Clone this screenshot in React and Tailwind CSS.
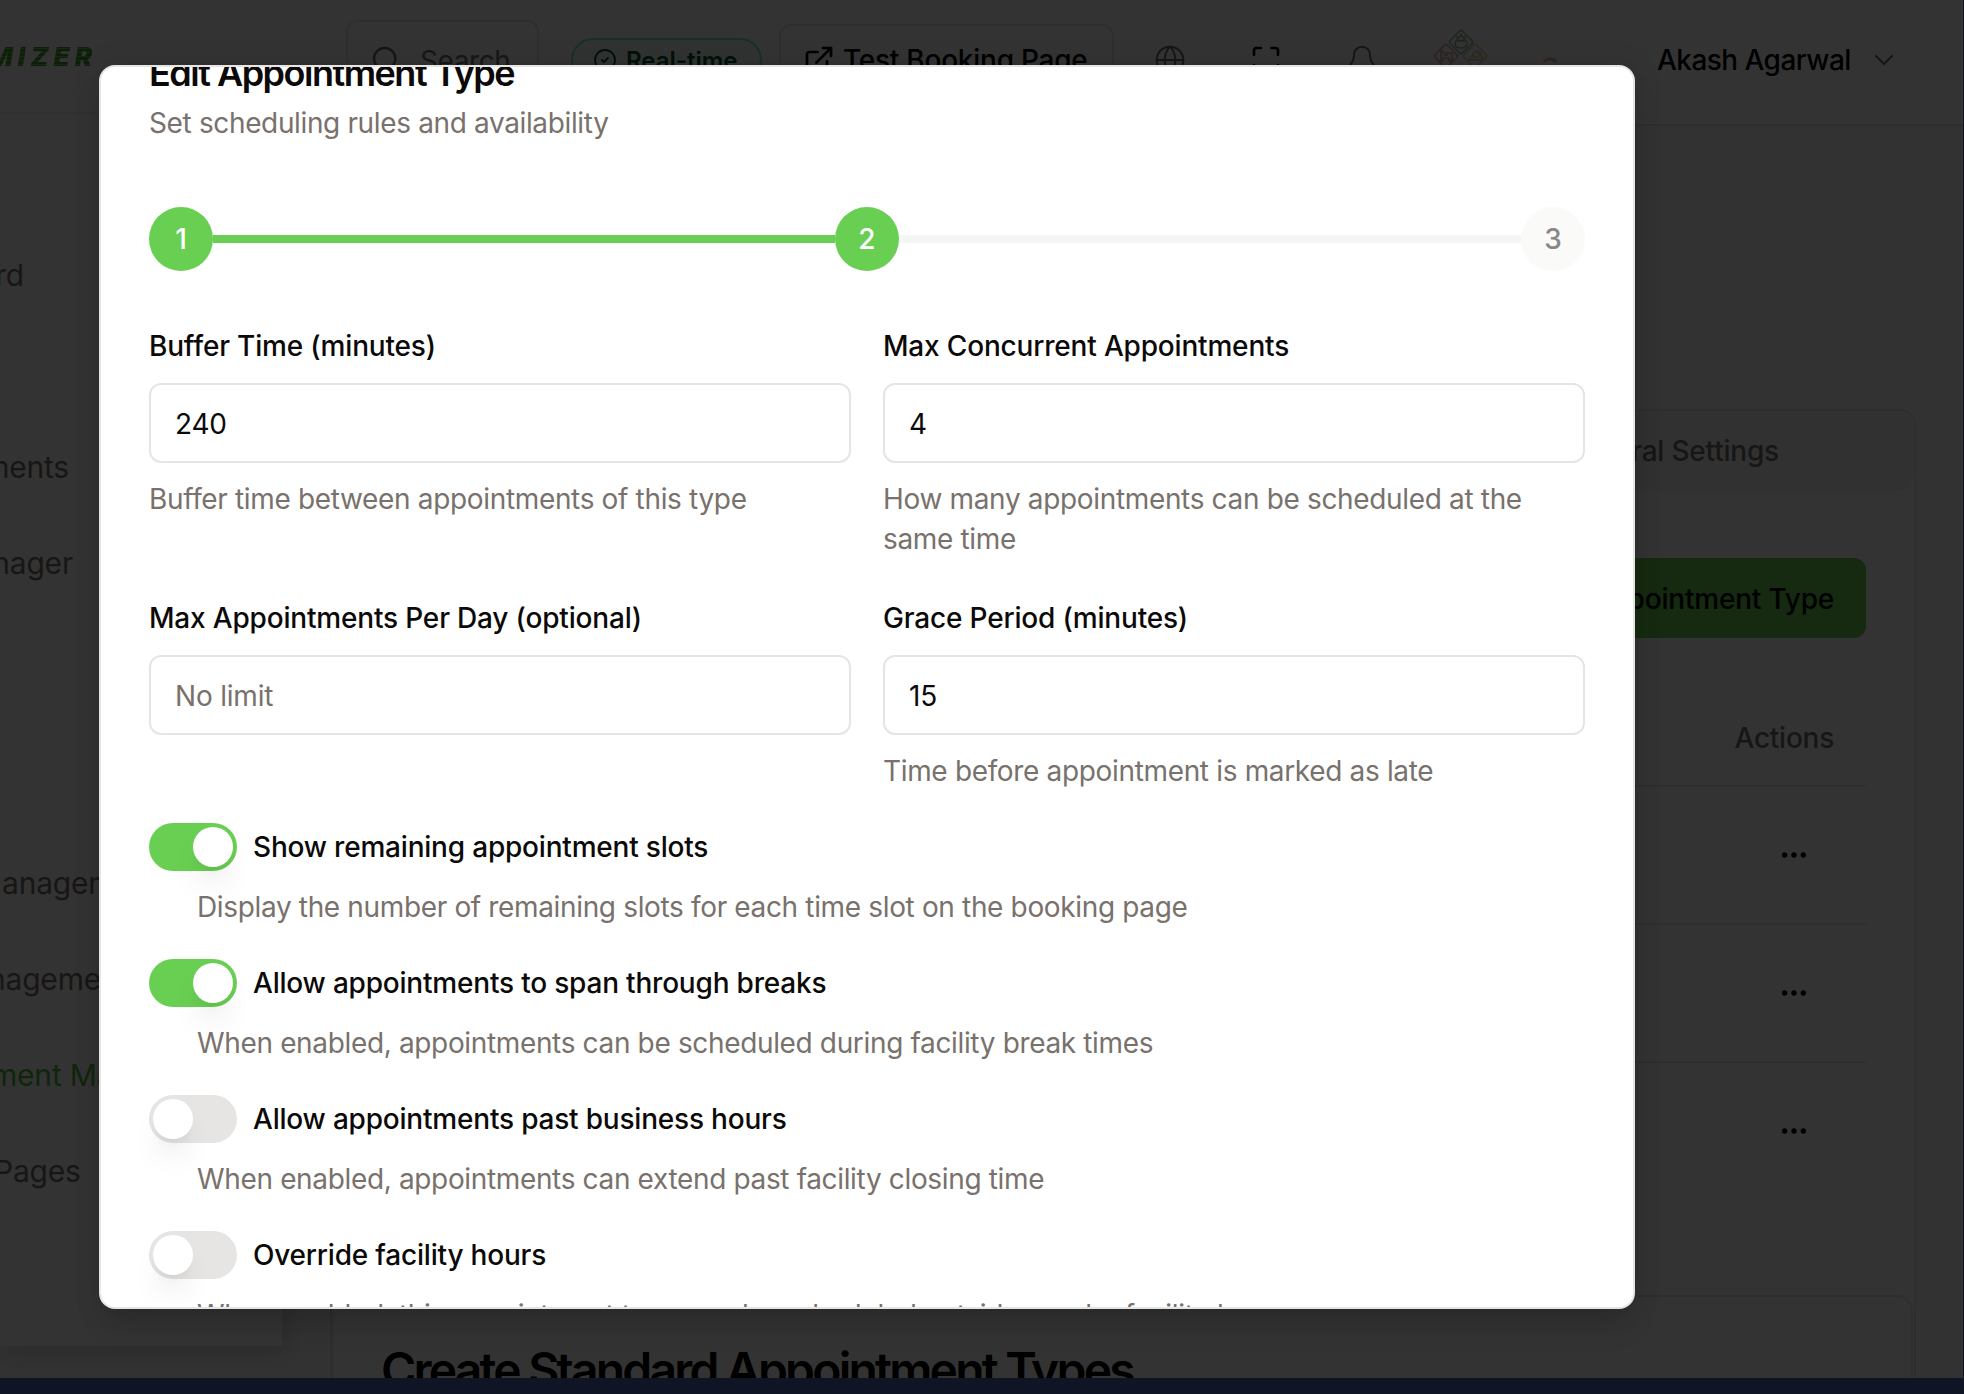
import { Search, CircleCheck, ExternalLink, Globe, Maximize, Bell, ChevronDown, Ellipsis } from "lucide-react";

const steps = [
  { n: 1, done: true },
  { n: 2, done: true },
  { n: 3, done: false },
];

const switches = [
  ["Show remaining appointment slots", "Display the number of remaining slots for each time slot on the booking page", true],
  ["Allow appointments to span through breaks", "When enabled, appointments can be scheduled during facility break times", true],
  ["Allow appointments past business hours", "When enabled, appointments can extend past facility closing time", false],
  ["Override facility hours", "When enabled, this appointment type can be scheduled outside regular facility hours", false],
];

const navItems = [
  { text: "rd", pos: "w-[24px] justify-end" },
  { text: "" },
  { text: "ments", pos: "w-[69px] justify-end" },
  { text: "nager", pos: "w-[73px] justify-end" },
];

const navItemsLower = [
  { text: "anagement", pos: "pl-[2px]" },
  { text: "nagement", pos: "-ml-[12px]" },
  { text: "ment Management", pos: "-ml-[9px]", active: true },
  { text: "Pages", pos: "-ml-[6px]" },
];

function NavList({ items }) {
  return items.map((item, i) => (
    <div
      key={i}
      className={
        "flex h-24 items-center text-[30px] tracking-[-0.2px] whitespace-nowrap " +
        (item.active ? "text-[#58bb42] " : "text-stone-500 ") +
        (item.pos || "")
      }
    >
      {item.text}
    </div>
  ));
}

function Sidebar() {
  return (
    <aside className="h-[1346px] w-[282px] shrink-0 overflow-hidden bg-white shadow-[4px_8px_24px_rgba(0,0,0,0.15)]">
      <div className="flex h-[114px] items-center border-b-2 border-stone-100">
        <div className="-ml-[12px] bg-[repeating-linear-gradient(180deg,#3f9d2c_0px,#3f9d2c_3px,#6fc95b_3px,#6fc95b_4px)] bg-clip-text pr-1 text-[26px] font-black tracking-[5px] text-transparent italic">
          MIZER
        </div>
      </div>
      <div className="pt-[113px]">
        <NavList items={navItems} />
        <div className="h-[224px]" />
        <NavList items={navItemsLower} />
      </div>
    </aside>
  );
}

function CompanyLogo() {
  return (
    <svg className="ml-[52px] h-16 w-40 shrink-0 opacity-60" viewBox="0 0 160 64" fill="none" strokeWidth="1.500" strokeLinejoin="round">
      <g stroke="#5d9468">
        <rect x="22.3" y="5.3" width="17.4" height="17.4" rx="2" transform="rotate(45 31 14)" />
        <path d="M27 12c-3 2-3 8 4 8s7-6 4-8" />
        <path d="M26.5 8.500 29 9.500l2-3 2 3 2.500-1-1.500 3.500 1.500 1-4-.5-.5 1-.5-1-4 .5 1.500-1z" />
      </g>
      <g stroke="#c9764d">
        <rect x="7.3" y="19.3" width="17.4" height="17.4" rx="2" transform="rotate(45 16 28)" />
        <path d="M11 25v8h2v-3h6v3h3v-8h-8l-3-3zM14 27h4" />
      </g>
      <g stroke="#c9a84d">
        <rect x="36.3" y="19.3" width="17.4" height="17.4" rx="2" transform="rotate(45 45 28)" />
        <circle cx="46" cy="26.5" r="3" />
        <path d="M38.500 32h13.500c0-6-1-9-5-9s-4 6-8.500 9z" />
      </g>
      <path d="M114 34c2-4 10-4 12 0" stroke="#d98a5c" strokeWidth="3" />
    </svg>
  );
}

function Header() {
  return (
    <header className="flex h-[126px] shrink-0 items-center border-b-2 border-stone-200 bg-white pb-1 pl-[64px]">
      <div className="flex h-20 w-[193px] shrink-0 items-center rounded-xl border-2 border-stone-200 pl-[22px] text-[28px] tracking-[-0.4px] text-stone-500">
        <Search className="mr-[18px] size-8 shrink-0" strokeWidth={1.8} />
        <span className="pt-[2px]">Search</span>
      </div>
      <div className="ml-8 flex h-11 w-[191px] shrink-0 items-center gap-[9px] rounded-full border-2 border-green-300 bg-green-50 pl-5 text-2xl font-semibold whitespace-nowrap text-green-900">
        <CircleCheck className="size-6 shrink-0" strokeWidth={1.8} />
        <span className="pt-[2px]">Real-time</span>
      </div>
      <div className="ml-[17px] flex h-[72px] w-[335px] shrink-0 items-center gap-2 rounded-xl border-2 border-stone-200 pl-[22px] text-[28px] font-medium tracking-[-0.25px] whitespace-nowrap text-black">
        <ExternalLink className="size-8 shrink-0" />
        <span>Test Booking Page</span>
      </div>
      <Globe className="ml-10 size-8 shrink-0 text-stone-500" strokeWidth={1.5} />
      <Maximize className="ml-16 size-8 shrink-0 text-black" />
      <Bell className="ml-16 size-8 shrink-0 text-stone-500" strokeWidth={1.5} />
      <CompanyLogo />
      <span className="ml-[67px] w-[211px] shrink-0 text-[28px] font-medium tracking-[-0.55px] whitespace-nowrap text-black">Akash Agarwal</span>
      <ChevronDown className="size-8 shrink-0 text-stone-500" strokeWidth={1.6} />
    </header>
  );
}

function Content() {
  return (
    <main className="ml-12 flex h-[969px] w-[1586px] flex-col rounded-t-2xl border-2 border-b-0 border-stone-200 bg-white">
      <div className="flex h-20 shrink-0 items-center justify-end rounded-2xl bg-stone-100 pr-[135px] text-[28px] font-medium tracking-[-0.2px] text-stone-500">
        ral Settings
      </div>
      <div className="mr-12 ml-12 flex flex-col pt-[67px]">
        <div className="flex h-20 w-[400px] items-center justify-end self-end rounded-xl bg-[#69cf52] pr-8 text-[28px] font-medium tracking-[-0.2px] whitespace-nowrap text-black">
          <span className="pt-[1px]">pointment Type</span>
        </div>
        <div className="mt-[52px] flex h-[97px] items-center justify-end border-b-2 border-stone-200 pt-[1px] pr-8 text-[28px] font-medium tracking-[-0.25px] text-stone-500">
          Actions
        </div>
        {[0, 1, 2].map((r) => (
          <div key={r} className={r < 2 ? "flex h-[138px] items-center justify-end border-b-2 border-stone-200 pr-14" : "flex h-[138px] items-center justify-end pr-14 pb-[2px]"}>
            <Ellipsis className="size-8 text-black" />
          </div>
        ))}
      </div>
      <div className="mt-auto mr-[1px] -ml-[1px] h-[83px] shrink-0 overflow-hidden rounded-t-2xl border-2 border-b-0 border-stone-200 bg-white pt-[49px] pl-[48px]">
        <h2 className="text-[48px] leading-[48px] font-semibold tracking-[-2.8px] whitespace-nowrap text-black">Create Standard Appointment Types</h2>
      </div>
    </main>
  );
}

function Field({ label, value, placeholder, help }) {
  return (
    <div className="flex flex-col">
      <label className="h-7 text-[28px] leading-[30px] font-medium tracking-[-0.18px] whitespace-nowrap text-[#0c0a09]">{label}</label>
      <input
        className="mt-6 h-20 w-full rounded-xl border-2 border-[#e7e5e4] bg-white px-6 pt-[2px] text-[28px] tracking-[-0.2px] text-[#0c0a09] placeholder:text-[#78716c]"
        defaultValue={value}
        placeholder={placeholder}
      />
      {help && <p className="mt-4 text-[28px] leading-10 tracking-[-0.34px] text-[#78716c]">{help}</p>}
    </div>
  );
}

function Toggle({ label, help, on }) {
  return (
    <div className="h-[104px]">
      <div className="flex h-12 items-center gap-4">
        <div className={on ? "flex h-12 w-[88px] items-center justify-end rounded-full bg-[#69cf52] p-1" : "flex h-12 w-[88px] items-center rounded-full bg-[#e7e5e4] p-1"}>
          <div className="size-10 rounded-full bg-white shadow-[0_20px_30px_-6px_rgba(0,0,0,0.1),0_8px_12px_-8px_rgba(0,0,0,0.1)]" />
        </div>
        <span className="text-[28px] leading-7 font-medium tracking-[-0.2px] whitespace-nowrap text-[#0c0a09]">{label}</span>
      </div>
      <p className="mt-4 ml-12 text-[28px] leading-10 tracking-[-0.35px] whitespace-nowrap text-[#78716c]">{help}</p>
    </div>
  );
}

function EditDialog() {
  return (
    <div className="absolute top-[65px] left-[99px] h-[1244px] w-[1536px] overflow-hidden rounded-2xl border-2 border-[#e7e5e4] bg-white px-12 shadow-[0_20px_30px_-6px_rgba(0,0,0,0.15),0_0_30px_rgba(0,0,0,0.1)]">
      <h2 className="-mt-3 text-[36px] leading-9 font-semibold tracking-[-1.5px] text-[#0c0a09]">Edit Appointment Type</h2>
      <p className="mt-3 text-[28px] leading-10 tracking-[-0.36px] text-[#78716c]">Set scheduling rules and availability</p>
      <div className="mt-[64px] flex items-center">
        {steps.map((s, i) => (
          <div key={s.n} className={i ? "flex flex-1 items-center" : "flex items-center"}>
            {i > 0 && <div className={s.done ? "h-2 flex-1 bg-[#69cf52]" : "h-2 flex-1 bg-[#f5f5f4]"} />}
            <div className={s.done ? "flex size-16 items-center justify-center rounded-full bg-[#69cf52] text-[28px] font-medium text-white" : "flex size-16 items-center justify-center rounded-full bg-[#fafaf9] text-[28px] font-medium text-[#888]"}>{s.n}</div>
          </div>
        ))}
      </div>
      <div className="mt-[60px] grid grid-cols-2 gap-x-8 gap-y-11">
        <Field label="Buffer Time (minutes)" value="240" help="Buffer time between appointments of this type" />
        <Field label="Max Concurrent Appointments" value="4" help="How many appointments can be scheduled at the same time" />
        <Field label="Max Appointments Per Day (optional)" placeholder="No limit" />
        <Field label="Grace Period (minutes)" value="15" help="Time before appointment is marked as late" />
      </div>
      <div className="mt-8 flex flex-col gap-8">
        {switches.map(([l, h, on]) => <Toggle key={l} label={l} help={h} on={on} />)}
      </div>
    </div>
  );
}

export default function App() {
  return (
    <div className="relative h-[1394px] w-[1964px] overflow-hidden bg-[#0f1524] font-['Inter',sans-serif]">
      <div className="relative flex h-[1378px] w-[1963px] overflow-hidden bg-stone-50">
        <Sidebar />
        <div className="flex min-w-0 flex-1 flex-col justify-between">
          <Header />
          <Content />
        </div>
        <div className="absolute inset-0 bg-black/80" />
      </div>
      <EditDialog />
    </div>
  );
}
